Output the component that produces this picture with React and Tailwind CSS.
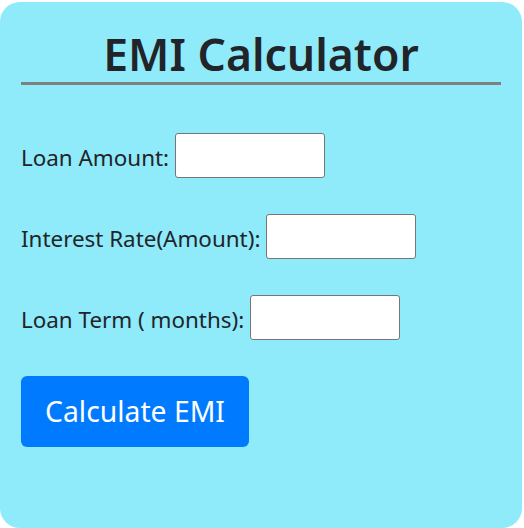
import React, { useState } from 'react';

export default function App() {
    const [amount, setAmount] = useState('');
    const [rate, setRate] = useState('');
    const [term, setTerm] = useState('');

    const fields = [
        { label: 'Loan Amount:', value: amount, set: setAmount },
        { label: 'Interest Rate(Amount):', value: rate, set: setRate },
        { label: 'Loan Term ( months):', value: term, set: setTerm },
    ];

    return (
        <div className="w-[524px] h-[528px] bg-white font-['Noto_Sans',sans-serif] text-[#212529]">
            <div className="mt-[2px] w-[522px] h-[526px] bg-[#8feafa] rounded-[20px] px-[21px] pt-[24px]">
                {/* Title */}
                <h1 className="text-center text-[44.5px] leading-[56px] font-semibold border-b-[3px] border-[#808080]">
                    EMI Calculator
                </h1>

                {/* Inputs */}
                <div className="mt-[48px] flex flex-col gap-[36px]">
                    {fields.map(f => (
                        <div key={f.label} className="flex items-start gap-[6px]">
                            <label className="text-[22.4px] h-[45px] leading-[49px]">{f.label}</label>
                            <input
                                value={f.value}
                                onChange={e => f.set(e.target.value)}
                                className="w-[150px] h-[45px] bg-white border border-[#767676] rounded-[3px]"
                            />
                        </div>
                    ))}
                </div>

                {/* Button */}
                <button className="mt-[36px] w-[228px] h-[71px] bg-[#007bff] rounded-[6px] text-white text-[28.3px]">
                    Calculate EMI
                </button>
            </div>
        </div>
    );
}
